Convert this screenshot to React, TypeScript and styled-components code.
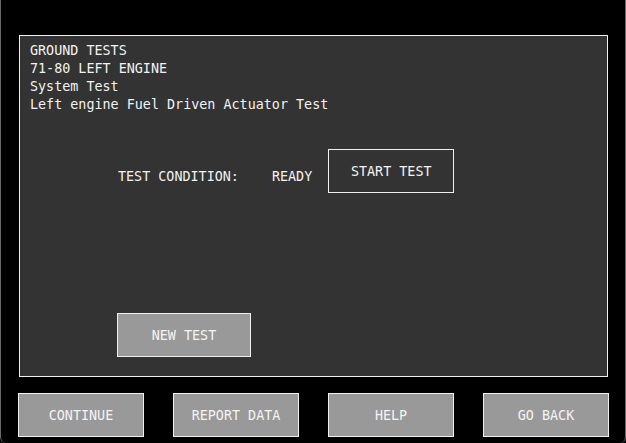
import React from "react";
import styled, { createGlobalStyle } from "styled-components";

const Global = createGlobalStyle`
  html, body { margin: 0; padding: 0; background: #000; }
  body { font-family: "DejaVu Sans Mono", "Liberation Mono", monospace; }
`;

const Screen = styled.div`
  width: 626px;
  height: 443px;
  box-sizing: border-box;
  background: #000;
  border-left: 1px solid #6a6a6a;
  border-right: 1px solid #6a6a6a;
  border-bottom-left-radius: 6px;
  border-bottom-right-radius: 6px;
  padding: 35px 16px 0 17px;
  display: flex;
  flex-direction: column;
  font-family: "DejaVu Sans Mono", "Liberation Mono", monospace;
  font-size: 13.4px;
  color: #f2f2f2;
`;

const Panel = styled.div`
  margin: 0 1px;
  height: 342px;
  box-sizing: border-box;
  border: 1px solid #f0f0f0;
  background: #333333;
  display: flex;
  flex-direction: column;
  padding: 6px 0 19px 10px;
`;

const Header = styled.div`
  line-height: 18px;
  white-space: pre;
`;

const ConditionRow = styled.div`
  margin: 35px 0 0 88px;
  display: flex;
  align-items: flex-end;
`;

const Label = styled.span<{ $gap: number }>`
  line-height: 18px;
  padding-bottom: 7px;
  margin-right: ${(p) => p.$gap}px;
  white-space: pre;
`;

const Button = styled.button<{ $filled?: boolean; $w: number }>`
  width: ${(p) => p.$w}px;
  height: 44px;
  box-sizing: border-box;
  border: 1px solid #f0f0f0;
  background: ${(p) => (p.$filled ? "#999999" : "transparent")};
  color: #f4f4f4;
  font-family: inherit;
  font-size: 13.4px;
  padding: 0;
  margin: 0;
  display: flex;
  align-items: center;
  justify-content: center;
  white-space: pre;
`;

const NewTestWrap = styled.div`
  margin-top: auto;
  margin-left: 87px;
`;

const Footer = styled.div`
  margin-top: 16px;
  display: flex;
  justify-content: space-between;
`;

export default function App() {
  return (
    <>
      <Global />
      <Screen>
        <Panel>
          <Header>
            {"GROUND TESTS\n71-80 LEFT ENGINE\nSystem Test\nLeft engine Fuel Driven Actuator Test"}
          </Header>
          <ConditionRow>
            <Label $gap={33}>TEST CONDITION:</Label>
            <Label $gap={16}>READY</Label>
            <Button $w={126}>START TEST</Button>
          </ConditionRow>
          <NewTestWrap>
            <Button $filled $w={134}>NEW TEST</Button>
          </NewTestWrap>
        </Panel>
        <Footer>
          <Button $filled $w={126}>CONTINUE</Button>
          <Button $filled $w={126}>REPORT DATA</Button>
          <Button $filled $w={126}>HELP</Button>
          <Button $filled $w={126}>GO BACK</Button>
        </Footer>
      </Screen>
    </>
  );
}
